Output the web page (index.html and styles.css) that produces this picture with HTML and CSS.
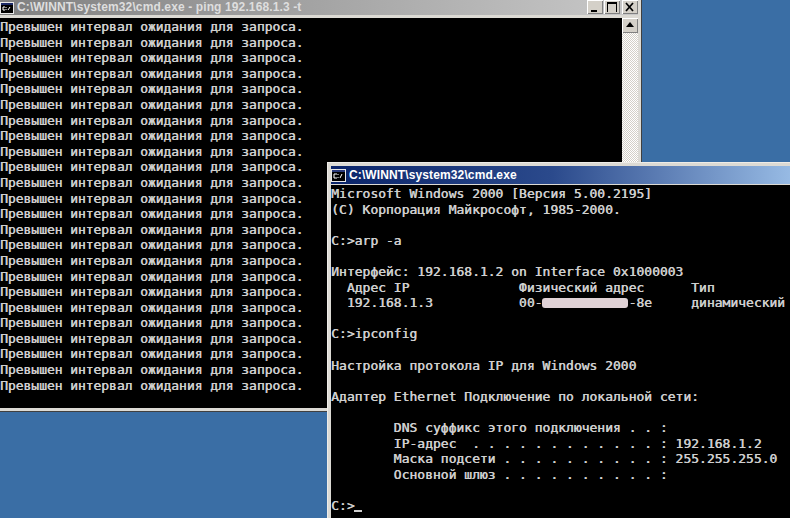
FILE: index.html
```html
<!DOCTYPE html>
<html lang="ru">
<head>
<meta charset="utf-8">
<title>cmd</title>
<link rel="stylesheet" href="styles.css">
</head>
<body>
<div class="desktop">
  <section class="window window-ping">
    <header class="titlebar titlebar-inactive">
      <svg class="app-icon" width="14" height="12" viewBox="0 0 14 12"><rect width="14" height="12" fill="#d4d0c8"/><rect x="0.5" y="0.5" width="13" height="11" fill="#000" stroke="#e8e8e8"/><rect x="1" y="1" width="12" height="2" fill="#1c2a66"/><path d="M5 5H3V8H5M6 5V6M6 7V8M8 8L10 5" stroke="#fff" fill="none"/></svg>
      <span class="title-text">C:\WINNT\system32\cmd.exe - ping 192.168.1.3 -t</span>
      <div class="title-buttons">
        <span class="title-button"><svg width="16" height="14" viewBox="0 0 16 14"><rect x="4" y="10" width="6" height="2" fill="#000"/></svg></span>
        <span class="title-button"><svg width="16" height="14" viewBox="0 0 16 14"><path d="M3.5 2V12M12.5 2V12" stroke="#000" fill="none"/><rect x="3" y="2" width="10" height="2" fill="#000"/></svg></span>
        <span class="title-button title-button-close"><svg width="16" height="14" viewBox="0 0 16 14"><path d="M4 3L11 11M11 3L4 11" stroke="#000" stroke-width="1.7" fill="none"/></svg></span>
      </div>
    </header>
    <div class="client">
      <pre class="console console-ping">Превышен интервал ожидания для запроса.
Превышен интервал ожидания для запроса.
Превышен интервал ожидания для запроса.
Превышен интервал ожидания для запроса.
Превышен интервал ожидания для запроса.
Превышен интервал ожидания для запроса.
Превышен интервал ожидания для запроса.
Превышен интервал ожидания для запроса.
Превышен интервал ожидания для запроса.
Превышен интервал ожидания для запроса.
Превышен интервал ожидания для запроса.
Превышен интервал ожидания для запроса.
Превышен интервал ожидания для запроса.
Превышен интервал ожидания для запроса.
Превышен интервал ожидания для запроса.
Превышен интервал ожидания для запроса.
Превышен интервал ожидания для запроса.
Превышен интервал ожидания для запроса.
Превышен интервал ожидания для запроса.
Превышен интервал ожидания для запроса.
Превышен интервал ожидания для запроса.
Превышен интервал ожидания для запроса.
Превышен интервал ожидания для запроса.
Превышен интервал ожидания для запроса.</pre>
      <div class="scrollbar">
        <span class="scroll-button"><svg width="16" height="15" viewBox="0 0 16 15"><path d="M8 4L12 9H4Z" fill="#000"/></svg></span>
        <div class="scroll-track"></div>
      </div>
    </div>
  </section>

  <section class="window window-main">
    <header class="titlebar titlebar-active">
      <svg class="app-icon" width="15" height="13" viewBox="0 0 15 13"><rect x="0.5" y="0.5" width="14" height="12" fill="#000" stroke="#e8e8e8"/><rect x="1" y="1" width="13" height="2" fill="#2a3a7a"/><path d="M6 5H3V9H6M7 5V6M7 8V9M9 9L11 5" stroke="#fff" fill="none"/></svg>
      <span class="title-text">C:\WINNT\system32\cmd.exe</span>
    </header>
    <pre class="console">Microsoft Windows 2000 [Версия 5.00.2195]
(C) Корпорация Майкрософт, 1985-2000.

C:&gt;arp -a

Интерфейс: 192.168.1.2 on Interface 0x1000003
  Адрес IP              Физический адрес      Тип
  192.168.1.3           00-<span class="redacted"></span>-8e     динамический

C:&gt;ipconfig

Настройка протокола IP для Windows 2000

Адаптер Ethernet Подключение по локальной сети:

        DNS суффикс этого подключения . . :
        IP-адрес  . . . . . . . . . . . . : 192.168.1.2
        Маска подсети . . . . . . . . . . : 255.255.255.0
        Основной шлюз . . . . . . . . . . :

C:&gt;<span class="cursor"></span></pre>
  </section>
</div>
</body>
</html>
```
FILE: styles.css
```css
html, body {
  margin: 0;
  padding: 0;
  background: #3a6ea5;
}

.desktop {
  position: relative;
  width: 790px;
  height: 518px;
  overflow: hidden;
  background: #3a6ea5;
}

.window {
  position: absolute;
  box-sizing: border-box;
  display: flex;
  flex-direction: column;
  padding: 3px;
  background: #dcdad4;
  border: 1px solid;
  border-color: #eeece8 #404040 #404040 #eeece8;
}

.window-ping {
  left: -4px;
  top: -4px;
  width: 646px;
  height: 416px;
}

.window-main {
  left: 327px;
  top: 162px;
  width: 500px;
  height: 380px;
}

.titlebar {
  display: flex;
  align-items: center;
  flex: none;
  gap: 3px;
  font-family: "Liberation Sans", Arial, sans-serif;
  font-size: 12px;
  font-weight: 700;
  letter-spacing: 0.12px;
  color: #fff;
  white-space: nowrap;
}

.titlebar-inactive {
  height: 15px;
  margin-bottom: 3px;
  background: linear-gradient(90deg, #808080 0%, #c8c8c8 100%);
  color: #dedede;
}

.titlebar-active {
  height: 18px;
  margin-bottom: 1px;
  background: linear-gradient(90deg, #0a246a 0%, #2b4a8c 45%, #a6caf0 100%);
}

.title-text {
  flex: 1;
  line-height: 15px;
}

.title-buttons {
  display: flex;
  gap: 1px;
  flex: none;
  height: 14px;
  align-self: flex-start;
}

.title-button,
.scroll-button {
  display: block;
  box-sizing: border-box;
  width: 16px;
  background: #d4d0c8;
  box-shadow: inset 1px 1px 0 #fff, inset -1px -1px 0 #808080;
}

.title-button {
  height: 14px;
}

.title-button-close {
  margin-left: 1px;
}

.title-button svg,
.scroll-button svg,
.app-icon {
  display: block;
  flex: none;
}

.client {
  display: flex;
  flex: 1;
  min-height: 0;
}

.console {
  flex: 1;
  margin: 0;
  padding: 1px 0 0 0;
  background: #000;
  color: #cfcfcf;
  font-family: "DejaVu Sans Mono", "Liberation Mono", monospace;
  font-size: 13px;
  line-height: 15.6px;
  text-shadow: 0.5px 0 0 #cfcfcf;
  overflow: hidden;
}

.console-ping {
  letter-spacing: -0.05px;
}

.scrollbar {
  display: flex;
  flex-direction: column;
  flex: none;
  width: 16px;
}

.scroll-button {
  height: 15px;
  flex: none;
}

.scroll-track {
  flex: 1;
  background: repeating-conic-gradient(#d4d0c8 0 25%, #ffffff 0 50%) 0 0 / 2px 2px;
}

.redacted {
  display: inline-block;
  width: 11ch;
  height: 10px;
  border-radius: 3px;
  background: #e0d2d6;
  vertical-align: -1px;
}

.cursor {
  display: inline-block;
  width: 1ch;
  height: 2px;
  background: #cfcfcf;
  vertical-align: -2px;
}
```
